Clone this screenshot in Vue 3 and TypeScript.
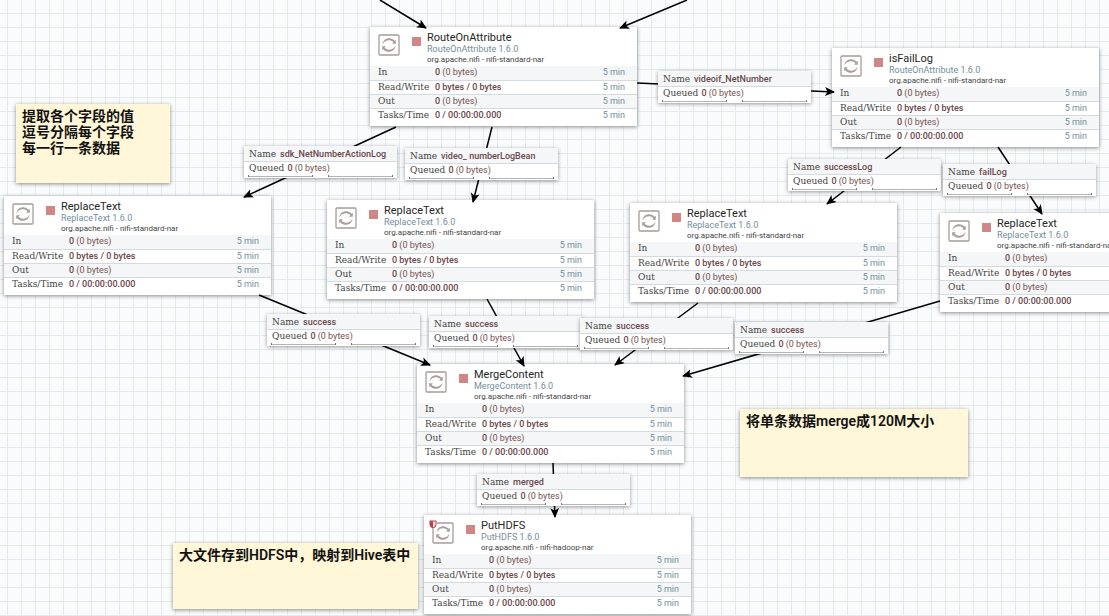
<script setup lang="ts">
interface Processor {
  id: string
  name: string
  type: string
  bundle: string
  x: number
  y: number
  restricted?: boolean
}

interface Connection {
  id: string
  name: string
  x: number
  y: number
}

interface Note {
  id: string
  lines: string[]
  x: number
  y: number
  w: number
  h: number
}

const standard = 'org.apache.nifi - nifi-standard-nar'

const processors: Processor[] = [
  { id: 'route', name: 'RouteOnAttribute', type: 'RouteOnAttribute 1.6.0', bundle: standard, x: 370, y: 27 },
  { id: 'fail', name: 'isFailLog', type: 'RouteOnAttribute 1.6.0', bundle: standard, x: 832, y: 48 },
  { id: 'replace1', name: 'ReplaceText', type: 'ReplaceText 1.6.0', bundle: standard, x: 4, y: 196 },
  { id: 'replace2', name: 'ReplaceText', type: 'ReplaceText 1.6.0', bundle: standard, x: 327, y: 200 },
  { id: 'replace3', name: 'ReplaceText', type: 'ReplaceText 1.6.0', bundle: standard, x: 630, y: 203 },
  { id: 'replace4', name: 'ReplaceText', type: 'ReplaceText 1.6.0', bundle: standard, x: 940, y: 213 },
  { id: 'merge', name: 'MergeContent', type: 'MergeContent 1.6.0', bundle: standard, x: 417, y: 364 },
  { id: 'hdfs', name: 'PutHDFS', type: 'PutHDFS 1.6.0', bundle: 'org.apache.nifi - nifi-hadoop-nar', x: 424, y: 515, restricted: true },
]

const stats = [
  { label: 'In', strong: '0', rest: '(0 bytes)' },
  { label: 'Read/Write', strong: '0 bytes / 0 bytes', rest: '' },
  { label: 'Out', strong: '0', rest: '(0 bytes)' },
  { label: 'Tasks/Time', strong: '0 / 00:00:00.000', rest: '' },
]

const connections: Connection[] = [
  { id: 'c1', name: 'videoif_NetNumber', x: 658, y: 71 },
  { id: 'c2', name: 'sdk_NetNumberActionLog', x: 244, y: 146 },
  { id: 'c3', name: 'video_ numberLogBean', x: 405, y: 148 },
  { id: 'c4', name: 'successLog', x: 788, y: 159 },
  { id: 'c5', name: 'failLog', x: 943, y: 164 },
  { id: 'c6', name: 'success', x: 267, y: 314 },
  { id: 'c7', name: 'success', x: 429, y: 316 },
  { id: 'c8', name: 'success', x: 580, y: 318 },
  { id: 'c9', name: 'success', x: 735, y: 322 },
  { id: 'c10', name: 'merged', x: 477, y: 474 },
]

const notes: Note[] = [
  { id: 'n1', lines: ['提取各个字段的值', '逗号分隔每个字段', '每一行一条数据'], x: 16, y: 104, w: 154, h: 79 },
  { id: 'n2', lines: ['将单条数据merge成120M大小'], x: 740, y: 409, w: 228, h: 68 },
  { id: 'n3', lines: ['大文件存到HDFS中，映射到Hive表中'], x: 173, y: 543, w: 245, h: 66 },
]

const paths = [
  'M380 0L426 28',
  'M687 0L620 28',
  'M637 83L834 92',
  'M396 127L244 197',
  'M492 127L473 202',
  'M901 147L827 204',
  'M998 147L1042 214',
  'M259 295L430 365',
  'M487 299L524 366',
  'M698 303L615 365',
  'M940 301L683 376',
  'M553 463L555 517',
]

const place = (item: { x: number; y: number }) => ({ left: `${item.x}px`, top: `${item.y}px` })
const placeNote = (n: Note) => ({ ...place(n), width: `${n.w}px`, height: `${n.h}px` })
</script>

<template>
  <main class="canvas">
    <section v-for="n in notes" :key="n.id" class="note" :style="placeNote(n)">
      <p v-for="line in n.lines" :key="line">{{ line }}</p>
    </section>

    <article v-for="p in processors" :key="p.id" class="processor" :style="place(p)">
      <header class="head">
        <svg class="icon" viewBox="0 0 22 22" aria-hidden="true">
          <rect x="1" y="1" width="20" height="20" rx="1" class="frame" />
          <path class="swirl" d="M4.500 10.200C5 3.800 13 2.300 16.600 6.800L17.800 5.800V9.800H14.200L15.400 8.200C12 5 7 6 4.500 10.200Z" />
          <path class="swirl" d="M17.500 11.800C17 18.200 9 19.700 5.400 15.200L4.200 16.200V12.200H7.800L6.600 13.800C10 17 15 16 17.500 11.800Z" />
        </svg>
        <svg v-if="p.restricted" class="shield" viewBox="0 0 8 9" aria-hidden="true">
          <path class="ground" d="M0 0H8V9H0Z" />
          <path d="M.500 .500H7.500V4.500C7.500 6.500 5.500 8 4 8.700C2.500 8 .500 6.500 .500 4.500Z" />
          <path class="half" d="M4 1.500H6.500V4.500C6.500 6 5 7 4 7.500Z" />
        </svg>
        <span class="stopped"></span>
        <div class="titles">
          <h2>{{ p.name }}</h2>
          <p class="type">{{ p.type }}</p>
          <p class="bundle">{{ p.bundle }}</p>
        </div>
      </header>
      <table class="stats">
        <tbody>
          <tr v-for="s in stats" :key="s.label">
            <th scope="row">{{ s.label }}</th>
            <td><b>{{ s.strong }}</b> {{ s.rest }}</td>
            <td class="window">5 min</td>
          </tr>
        </tbody>
      </table>
    </article>

    <svg class="wires" aria-hidden="true">
      <defs>
        <marker id="arrow" markerUnits="userSpaceOnUse" markerWidth="10" markerHeight="10" refX="9" refY="5" orient="auto">
          <path d="M0 .500L10 5L0 9.500L2.500 5Z" />
        </marker>
      </defs>
      <path v-for="d in paths" :key="d" :d="d" marker-end="url(#arrow)" />
    </svg>

    <section v-for="c in connections" :key="c.id" class="connection" :style="place(c)">
      <div class="line name"><span class="key">Name</span><b>{{ c.name }}</b></div>
      <div class="line queued"><span class="key">Queued</span><span><b>0</b> (0 bytes)</span></div>
      <div class="pressure"><i></i><i></i></div>
    </section>
  </main>
</template>

<style>
body {
  margin: 0;
}
</style>

<style scoped>
.canvas {
  position: relative;
  min-height: 100vh;
  overflow: hidden;
  background-color: #f9fbfc;
  background-image:
    linear-gradient(to right, #e3ebef 1px, transparent 1px),
    linear-gradient(to bottom, #e3ebef 1px, transparent 1px);
  background-size: 14px 14px;
  background-position: 7px 13px;
  font-family: Roboto, "Noto Sans CJK SC", sans-serif;
  font-size: 9px;
  color: #775351;
}
h2,
p {
  margin: 0;
}
b {
  font-weight: 500;
  color: #6b474a;
}
.wires {
  position: absolute;
  inset: 0;
  width: 100%;
  height: 100%;
}
.wires > path {
  fill: none;
  stroke: #000;
  stroke-width: 1.5;
}
.note {
  position: absolute;
  box-sizing: border-box;
  padding: 4px 6px;
  background: #fff7d7;
  box-shadow: 0 1px 4px rgba(0, 0, 0, 0.45);
  color: #111;
  font-size: 14px;
  font-weight: 600;
  line-height: 16px;
  white-space: nowrap;
}
.processor {
  position: absolute;
  width: 267px;
  height: 99px;
  background: #fff;
  box-shadow: 0 1px 4px rgba(0, 0, 0, 0.45);
}
.head {
  position: relative;
  display: flex;
  align-items: flex-start;
  box-sizing: border-box;
  height: 39px;
  padding: 4px 8px 0;
}
.icon {
  width: 22px;
  height: 22px;
  margin-top: 3px;
}
.frame {
  fill: #fff;
  stroke: #a89a9b;
  stroke-width: 1.3;
}
.swirl {
  fill: #ab9c9e;
}
.shield {
  position: absolute;
  left: 5px;
  top: 5px;
  width: 8px;
  height: 9px;
  fill: #b5474b;
}
.ground {
  fill: #fff;
}
.half {
  fill: #f3dcdc;
}
.stopped {
  width: 9px;
  height: 9px;
  margin: 6px 6px 0 12px;
  background: #d18686;
}
.titles {
  padding-top: 1px;
}
h2 {
  font-size: 11px;
  font-weight: 400;
  line-height: 12px;
  color: #262626;
}
.type {
  font-size: 9px;
  line-height: 11px;
  color: #728e9b;
}
.bundle {
  font-size: 8px;
  line-height: 10px;
  white-space: nowrap;
  color: #444;
}
.stats {
  width: 100%;
  border-collapse: collapse;
  table-layout: fixed;
}
.stats tr {
  height: 14px;
}
.stats th,
.stats td {
  box-sizing: border-box;
  height: 14px;
  padding: 0;
  border-bottom: 1px solid #d3dbde;
  line-height: 13px;
  text-align: left;
  white-space: nowrap;
}
.stats tr:nth-child(odd) {
  background: #f4f6f7;
}
.stats tr:last-child > * {
  border-bottom: 0;
}
.stats th {
  width: 65px;
  padding-left: 8px;
}
.stats th,
.key {
  font-family: "DejaVu Serif", serif;
  font-size: 9px;
  font-weight: 400;
  color: #444;
}
.stats .window {
  width: 40px;
  padding-right: 12px;
  text-align: right;
  color: #728e9b;
}
.connection {
  position: absolute;
  box-sizing: border-box;
  width: 153px;
  height: 32px;
  background: #fff;
  box-shadow: 0 1px 4px rgba(0, 0, 0, 0.4);
}
.line {
  display: flex;
  gap: 4px;
  padding: 0 5px;
  line-height: 14px;
  white-space: nowrap;
}
.name {
  padding-top: 1px;
  background: #f4f6f7;
  border-bottom: 1px solid #d3dbde;
}
.queued {
  gap: 3px;
  line-height: 13px;
}
.pressure {
  display: flex;
  justify-content: space-between;
  padding: 0 4px;
}
.pressure i {
  width: 65px;
  height: 2px;
  box-sizing: border-box;
  border: solid #777;
  border-width: 0 1px;
  background: linear-gradient(transparent 50%, #b5b5b5 50%);
}
</style>
